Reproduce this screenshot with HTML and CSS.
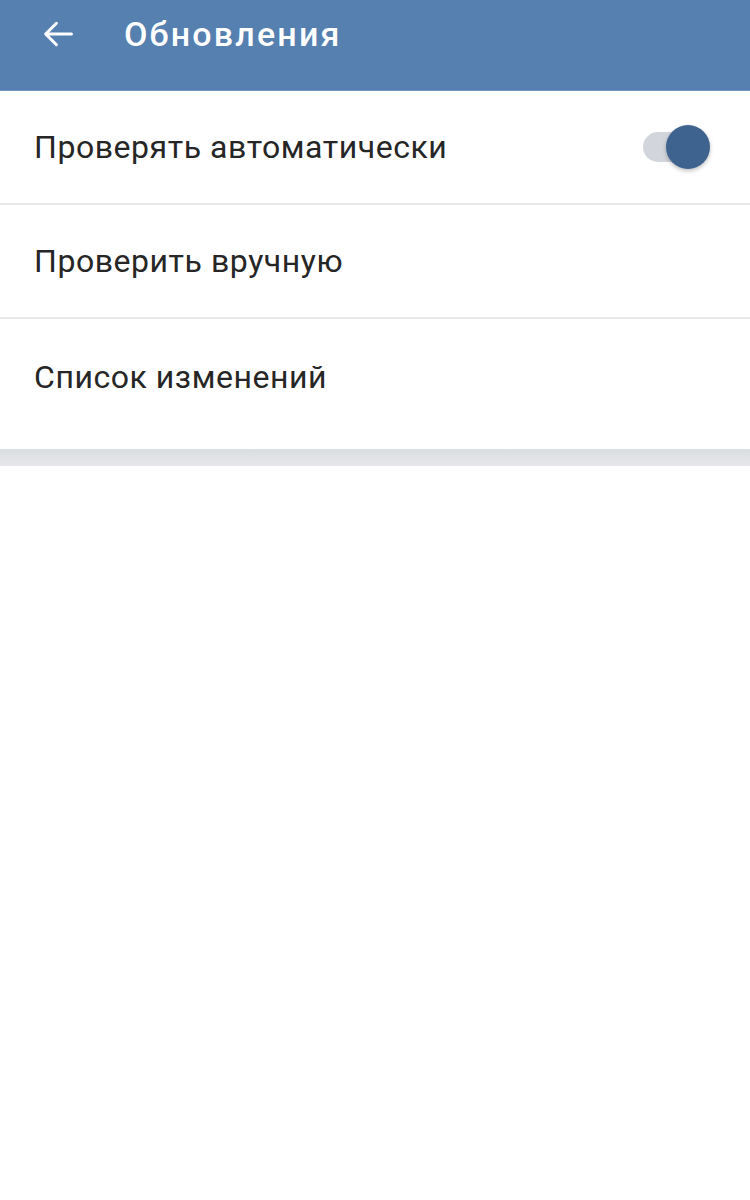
FILE: index.html
```html
<!DOCTYPE html>
<html lang="ru">
<head>
<meta charset="utf-8">
<link rel="stylesheet" href="styles.css">
</head>
<body>
<header class="bar">
  <svg class="back" width="38" height="38" viewBox="0 0 24 24"><path d="M20.5 12H4.5M11 5.2l-6.8 6.8 6.8 6.8" fill="none" stroke="#fff" stroke-width="1.9" stroke-linecap="round" stroke-linejoin="round"/></svg>
  <h1 class="title">Обновления</h1>
</header>
<main class="list">
  <div class="row">
    <span class="label">Проверять автоматически</span>
    <span class="switch"><span class="track"></span><span class="knob"></span></span>
  </div>
  <div class="row">
    <span class="label">Проверить вручную</span>
  </div>
  <div class="row last">
    <span class="label">Список изменений</span>
  </div>
</main>
<div class="band"></div>
</body>
</html>
```
FILE: styles.css
```css
* { box-sizing: border-box; }
html, body { margin: 0; padding: 0; background: #fff; }
body { font-family: Roboto, "Noto Sans", sans-serif; width: 750px; }
.bar {
  height: 91px;
  background: #5580b0;
  display: flex;
  align-items: center;
  padding: 0 0 22px 39px;
  border-bottom: 1px solid #6e93bd;
}
.back { display: block; }
.title {
  margin: 0 0 0 47px;
  color: #fff;
  font-family: Roboto, sans-serif;
  font-size: 34px;
  font-weight: 500;
  letter-spacing: 2.2px;
}
.list { display: flex; flex-direction: column; }
.row {
  height: 114px;
  display: flex;
  align-items: center;
  justify-content: space-between;
  padding: 0 40px 0 34px;
  border-bottom: 2px solid #e8e9eb;
}
.row.last { border-bottom: none; height: 130px; padding-bottom: 14px; }
.label {
  font-size: 32px;
  color: #262626;
  letter-spacing: 0.55px;
}
.switch {
  position: relative;
  width: 67px;
  height: 44px;
  display: block;
}
.track {
  position: absolute;
  left: 0; top: 7px;
  width: 58px; height: 30px;
  border-radius: 15px;
  background: #d2d6dc;
}
.knob {
  position: absolute;
  right: 0; top: 0;
  width: 44px; height: 44px;
  border-radius: 50%;
  background: #3f638f;
  box-shadow: 0 2px 4px rgba(0,0,0,0.25);
}
.band {
  height: 17px;
  background: linear-gradient(#dadde1, #e6e7ea);
}
```
